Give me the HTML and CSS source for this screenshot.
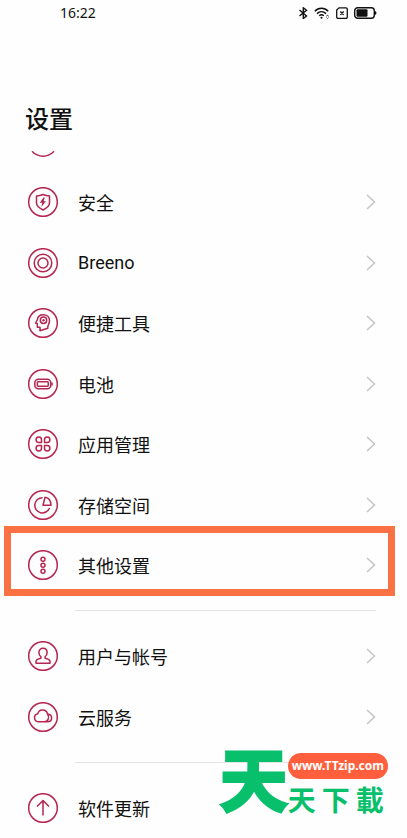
FILE: index.html
```html
<!DOCTYPE html>
<html lang="zh-CN">
<head>
<meta charset="utf-8">
<meta name="viewport" content="width=device-width, initial-scale=1">
<title>设置</title>
<link rel="stylesheet" href="styles.css">
</head>
<body>
<svg class="defs" aria-hidden="true">
  <symbol id="chevron" viewBox="0 0 10 16"><path d="M1 1l7.500 7L1 15"/></symbol>
</svg>
<div class="screen">
  <header class="status">
    <time class="clock">16:22</time>
    <div class="indicators">
      <svg width="10" height="12" viewBox="0 0 10 12" fill="none" stroke="#111" stroke-width="1.400"><path d="M1.500 3l7 6-3.200 2.500V.8l3.200 2.400-7 5.800"/></svg>
      <svg width="16" height="12" viewBox="0 0 16 12" fill="none" stroke="#111" stroke-width="1.500"><path d="M.8 4.200C4.600.2 10.400.2 14.200 4.200M3 6.600c2.600-2.500 6.400-2.500 9 0M5.200 8.800c1.400-1.300 3.200-1.300 4.600 0"/><circle cx="7.500" cy="10.700" r="1" fill="#111" stroke="none"/><path d="M12.500 9.500l1-1.500 1 1.500M12.500 10.500l1 1 1-1" stroke-width=".7"/></svg>
      <svg width="12" height="12" viewBox="0 0 12 12" fill="none" stroke="#111" stroke-width="1.300"><path d="M3 .8H10a1.300 1.300 0 0 1 1.300 1.300V10a1.300 1.300 0 0 1-1.300 1.300H2A1.300 1.300 0 0 1 .7 10V3zM4.300 4.500l3.400 3.400M7.700 4.500L4.300 7.900"/></svg>
      <svg width="23" height="12" viewBox="0 0 23 12"><rect x=".7" y=".7" width="19.600" height="10.600" rx="3" fill="none" stroke="#111" stroke-width="1.400"/><rect x="2.500" y="2.300" width="11" height="7.400" rx="1" fill="#111"/><path d="M21 4v4q1.500-.4 1.500-2T21 4z" fill="#111"/></svg>
    </div>
  </header>
  <h1 class="title">设置</h1>
  <main>
    <div class="peek"><svg class="arc" width="30" height="7" viewBox="0 0 30 7"><path d="M4 .3C10 6.800 20 6.800 26 .3"/></svg></div>
    <nav class="group">
      <a class="row" href="#"><svg class="icon" viewBox="0 0 30 30"><circle cx="15" cy="15" r="14.300"/><path d="M15 7.500c2.200 1 4.200 1.400 6.500 1.500v7c0 3.200-2.600 5-6.500 7-3.900-2-6.500-3.800-6.500-7V9c2.300-.1 4.300-.5 6.500-1.500z"/><path class="solid" d="M15.500 10.500l-3.700 5.200h2.500l-1 4.300 4.700-5.700h-2.400l1.200-3.800z"/></svg><span>安全</span><svg class="chevron"><use href="#chevron"/></svg></a>
      <a class="row" href="#"><svg class="icon" viewBox="0 0 30 30"><circle cx="15" cy="15" r="14.300"/><circle cx="15" cy="15" r="8.800"/><circle cx="15" cy="15" r="5"/></svg><span class="latin">Breeno</span><svg class="chevron"><use href="#chevron"/></svg></a>
      <a class="row" href="#"><svg class="icon" viewBox="0 0 30 30"><circle cx="15" cy="15" r="14.300"/><path d="M12 22.800v-3.500H9.300v-3.500L7.600 15l1.700-3c.3-3.400 2.800-5.300 6-5.300 3.700 0 6.200 2.500 6.200 5.900 0 3.300-1.700 4.200-1.700 6.400v1.300z"/><circle cx="15.500" cy="12.300" r="3.200"/><circle class="solid" cx="15.500" cy="12.300" r="1.200"/></svg><span>便捷工具</span><svg class="chevron"><use href="#chevron"/></svg></a>
      <a class="row" href="#"><svg class="icon" viewBox="0 0 30 30"><circle cx="15" cy="15" r="14.300"/><rect x="6.800" y="10.200" width="16" height="9.600" rx="3.500"/><rect x="9.300" y="12.700" width="11" height="4.600" rx="1"/><path d="M24 13.500v3"/></svg><span>电池</span><svg class="chevron"><use href="#chevron"/></svg></a>
      <a class="row" href="#"><svg class="icon" viewBox="0 0 30 30"><circle cx="15" cy="15" r="14.300"/><path d="M13.500 13.500h-2.700a2.700 2.700 0 1 1 2.700-2.700zM16.500 13.500v-2.700a2.700 2.700 0 1 1 2.700 2.700zM13.500 16.500v2.700a2.700 2.700 0 1 1-2.700-2.700zM16.500 16.500h2.700a2.700 2.700 0 1 1-2.700 2.700z"/></svg><span>应用管理</span><svg class="chevron"><use href="#chevron"/></svg></a>
      <a class="row" href="#"><svg class="icon" viewBox="0 0 30 30"><circle cx="15" cy="15" r="14.300"/><path d="M14.500 7.700a7.600 7.600 0 1 0 7 10.300M17 7.200l-2 8h8c0-4.300-2.300-7.300-6-8z"/></svg><span>存储空间</span><svg class="chevron"><use href="#chevron"/></svg></a>
      <a class="row marked" href="#"><svg class="icon" viewBox="0 0 30 30"><circle cx="15" cy="15" r="14.300"/><circle cx="15" cy="9.200" r="2"/><circle cx="15" cy="15.200" r="2"/><circle cx="15" cy="21.200" r="2"/></svg><span>其他设置</span><svg class="chevron"><use href="#chevron"/></svg></a>
    </nav>
    <hr class="divider">
    <nav class="group">
      <a class="row" href="#"><svg class="icon" viewBox="0 0 30 30"><circle cx="15" cy="15" r="14.300"/><path d="M15 7.300c2.500 0 4.100 1.700 4.100 4.100 0 1.800-.8 3.300-2 4.200v1.600c2.700.6 4.900 1.500 4.900 3.300v1.700H8v-1.700c0-1.800 2.200-2.700 4.900-3.300v-1.600c-1.200-.9-2-2.400-2-4.200 0-2.400 1.600-4.100 4.100-4.100z"/></svg><span>用户与帐号</span><svg class="chevron"><use href="#chevron"/></svg></a>
      <a class="row" href="#"><svg class="icon" viewBox="0 0 30 30"><circle cx="15" cy="15" r="14.300"/><path d="M10.300 19.700a4 4 0 0 1-.6-7.900c.8-2.500 2.700-3.800 4.800-3.800 2.700 0 4.700 1.700 5.100 4.200 2 3 .6 7.500-2.800 7.500zM19.800 12c2.400.4 3.800 1.900 3.800 3.900 0 2.200-1.600 3.800-4.100 3.800h-2.700"/></svg><span>云服务</span><svg class="chevron"><use href="#chevron"/></svg></a>
    </nav>
    <hr class="divider">
    <nav class="group">
      <a class="row" href="#"><svg class="icon" viewBox="0 0 30 30"><circle cx="15" cy="15" r="14.300"/><path d="M15 22.500V8M9 13.500L15 7.500l6 6"/></svg><span>软件更新</span></a>
    </nav>
  </main>
  <aside class="brand">
    <span class="brand-big">天</span>
    <div class="brand-side">
      <span class="brand-url">www.TTzip.com</span>
      <div class="brand-small"><span>天</span><span>下</span><span>載</span></div>
    </div>
  </aside>
</div>
</body>
</html>
```

FILE: styles.css
```css
* { box-sizing: border-box; }

body {
  margin: 0;
  background: #fefefe;
  color: #111;
  font-family: "Noto Sans CJK SC", sans-serif;
}

.defs {
  position: absolute;
  width: 0;
  height: 0;
}

.screen {
  position: relative;
  overflow: hidden;
}

.status {
  display: flex;
  align-items: center;
  justify-content: space-between;
  height: 26px;
  padding: 0 30px 0 60px;
}

.clock {
  font-family: "Noto Sans", sans-serif;
  font-size: 14px;
  line-height: 26px;
}

.indicators {
  display: flex;
  align-items: center;
  gap: 6px;
}

.title {
  margin: 74px 0 0;
  padding: 0 25px;
  font-size: 24px;
  font-weight: 500;
  line-height: 36px;
}

.peek {
  height: 21px;
  margin-top: 15px;
  padding-left: 28px;
}

.arc { display: block; }

.arc,
.icon {
  fill: none;
  stroke: #b52650;
  stroke-width: 1.5;
  stroke-linejoin: round;
}

.icon {
  flex: none;
  width: 30px;
  height: 30px;
}

.icon .solid {
  fill: #b52650;
  stroke: none;
}

.row {
  position: relative;
  display: flex;
  align-items: center;
  gap: 20px;
  min-height: 60px;
  padding: 0 31px 0 28px;
  color: inherit;
  font-size: 18px;
  line-height: 26px;
  text-decoration: none;
}

.row:nth-child(even) { min-height: 61px; }

.latin { font-family: Roboto, sans-serif; }

.chevron {
  width: 10px;
  height: 16px;
  margin-left: auto;
  fill: none;
  stroke: #c4c4c4;
  stroke-width: 1.5;
}

/* Frame drawn around the highlighted entry */
.marked::after {
  content: "";
  position: absolute;
  inset: -9px 12px -1px 4px;
  border: 7px solid #fa7143;
}

.divider {
  height: 1px;
  margin: 15px 31px 15px 75px;
  border: 0;
  background: #e4e4e4;
}

.brand {
  position: absolute;
  right: 19px;
  bottom: 23px;
  display: flex;
  align-items: flex-start;
  color: #08c06c;
  font-weight: 700;
}

.brand-big {
  font-size: 68px;
  line-height: 60px;
  -webkit-text-stroke: 3px #08c06c;
  stroke-linejoin: round;
}

.brand-side {
  display: flex;
  flex-direction: column;
  gap: 4px;
  padding-top: 6px;
}

.brand-url {
  padding: 0 4px;
  border-radius: 13px;
  background: #ff5f3d;
  color: #fff;
  font-family: "Noto Sans", sans-serif;
  font-size: 12px;
  line-height: 26px;
  text-align: center;
}

.brand-small {
  display: flex;
  gap: 6px;
  font-size: 28px;
  line-height: 32px;
}
```
